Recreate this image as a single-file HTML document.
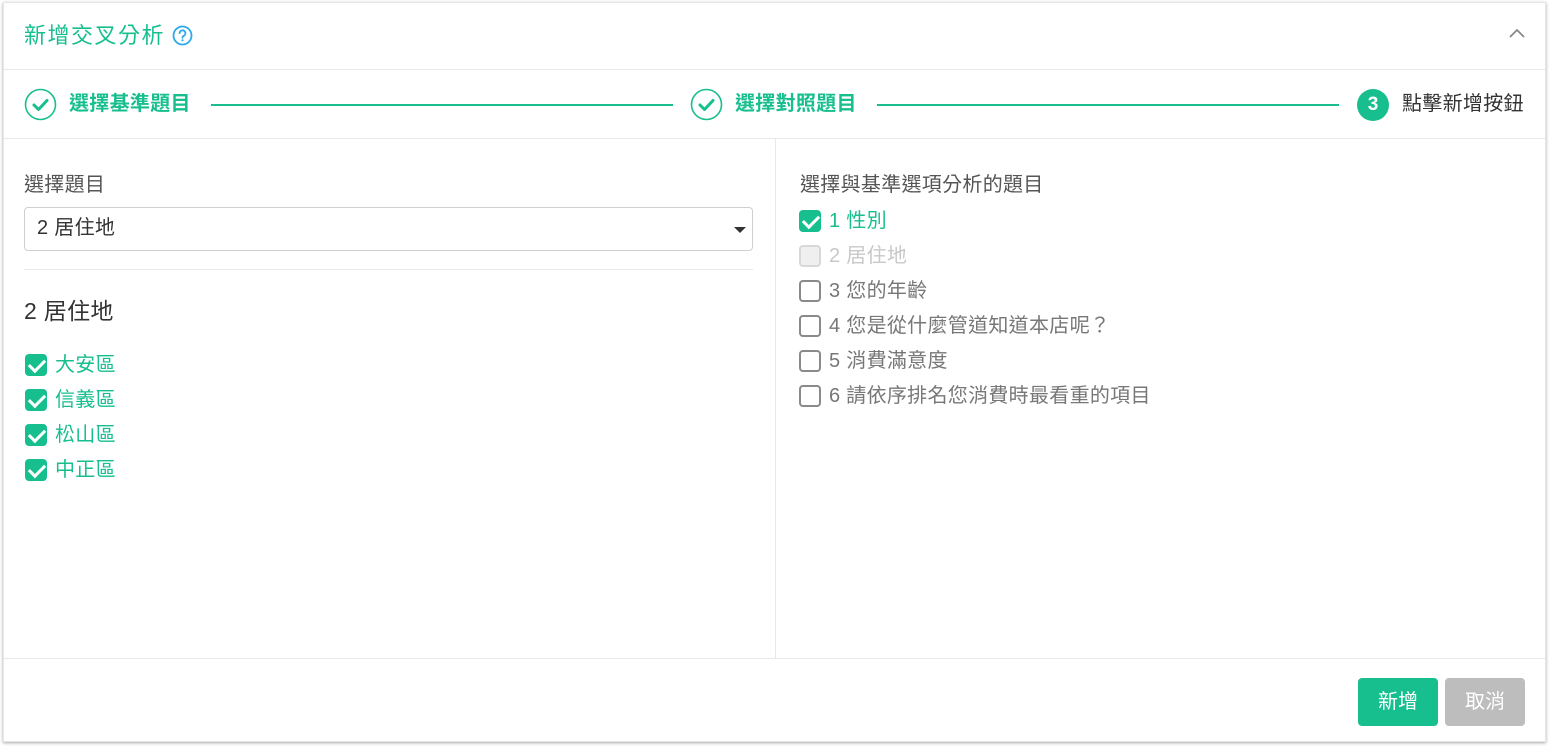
<!DOCTYPE html>
<html><head><meta charset="utf-8"><style>
*{box-sizing:border-box;margin:0;padding:0}
body{width:1552px;height:748px;background:#fff;font-family:"Liberation Sans","Noto Sans CJK TC",sans-serif;position:relative;overflow:hidden}
.panel{position:absolute;left:3px;top:2px;width:1543px;height:740px;border:1px solid #e6e6e6;box-shadow:0 1px 3px rgba(0,0,0,.35);background:#fff}
.g{color:#17bf8e}
.abs{position:absolute;white-space:nowrap}
.hl{position:absolute;left:0;right:0;height:1px;background:#e8e8e8}
.cb{position:absolute;width:22px;height:22px;border-radius:4px}
.cb.on{background:#17bf8e}
.cb.off{border:2px solid #8a8a8a}
.cb.dis{border:2px solid #d8d8d8;background:#efefef}
.lbl{position:absolute;font-size:20px;line-height:22px;white-space:nowrap;letter-spacing:0.3px}
.cb.on::after{content:"";position:absolute;width:13px;height:7px;border-left:3px solid #fff;border-bottom:3px solid #fff;transform:rotate(-45deg);left:4px;top:5px}
</style></head><body>
<div class="panel">
  <div class="abs g" style="left:20px;top:19px;font-size:22px;line-height:28px;letter-spacing:1.5px">新增交叉分析</div>
  <svg class="abs" style="left:168px;top:22px" width="21" height="21" viewBox="0 0 21 21"><circle cx="10.5" cy="10.5" r="9" fill="none" stroke="#2ca9e8" stroke-width="1.8"/><path d="M7.6 8.2a2.9 2.9 0 1 1 4.2 2.6c-.9.5-1.3 1-1.3 2" fill="none" stroke="#2ca9e8" stroke-width="1.8" stroke-linecap="round"/><circle cx="10.5" cy="15.3" r="1.1" fill="#2ca9e8"/></svg>
  <svg class="abs" style="left:1504px;top:24px" width="18" height="12" viewBox="0 0 18 12"><path d="M2 10L9 3l7 7" fill="none" stroke="#888" stroke-width="1.8"/></svg>
  <div class="hl" style="top:66px"></div>

  <svg class="abs" style="left:20px;top:85px" width="33" height="33" viewBox="0 0 33 33"><circle cx="16.5" cy="16.5" r="15" fill="none" stroke="#17bf8e" stroke-width="1.6"/><path d="M10 17l4.5 4.5L23 12.5" fill="none" stroke="#17bf8e" stroke-width="3" stroke-linecap="round" stroke-linejoin="round"/></svg>
  <div class="lbl g" style="left:65px;top:90px;font-weight:bold">選擇基準題目</div>
  <div class="abs" style="left:207px;top:101px;width:462px;height:2px;background:#17bf8e"></div>
  <svg class="abs" style="left:686px;top:85px" width="33" height="33" viewBox="0 0 33 33"><circle cx="16.5" cy="16.5" r="15" fill="none" stroke="#17bf8e" stroke-width="1.6"/><path d="M10 17l4.5 4.5L23 12.5" fill="none" stroke="#17bf8e" stroke-width="3" stroke-linecap="round" stroke-linejoin="round"/></svg>
  <div class="lbl g" style="left:731px;top:90px;font-weight:bold">選擇對照題目</div>
  <div class="abs" style="left:873px;top:101px;width:462px;height:2px;background:#17bf8e"></div>
  <div class="abs" style="left:1353px;top:86px;width:32px;height:32px;border-radius:50%;background:#17bf8e;color:#fff;font-weight:bold;font-size:19px;line-height:32px;text-align:center">3</div>
  <div class="lbl" style="left:1398px;top:90px;color:#333">點擊新增按鈕</div>
  <div class="hl" style="top:135px"></div>

  <div class="abs" style="left:771px;top:136px;width:1px;height:520px;background:#e8e8e8"></div>

  <div class="lbl" style="left:20px;top:171px;color:#555">選擇題目</div>
  <div class="abs" style="left:20px;top:204px;width:729px;height:44px;border:1px solid #cfcfcf;border-radius:4px"></div>
  <div class="lbl" style="left:33px;top:214px;color:#333">2 居住地</div>
  <div class="abs" style="left:730px;top:224px;width:0;height:0;border-left:6px solid transparent;border-right:6px solid transparent;border-top:6px solid #333"></div>
  <div class="abs" style="left:20px;top:266px;width:729px;height:1px;background:#e8e8e8"></div>
  <div class="lbl" style="left:20px;top:295px;font-size:23px;line-height:26px;color:#333">2 居住地</div>

  <div class="cb on" style="left:21px;top:351px"></div><div class="lbl g" style="left:51px;top:351px">大安區</div>
  <div class="cb on" style="left:21px;top:386px"></div><div class="lbl g" style="left:51px;top:386px">信義區</div>
  <div class="cb on" style="left:21px;top:421px"></div><div class="lbl g" style="left:51px;top:421px">松山區</div>
  <div class="cb on" style="left:21px;top:456px"></div><div class="lbl g" style="left:51px;top:456px">中正區</div>

  <div class="lbl" style="left:796px;top:171px;color:#555">選擇與基準選項分析的題目</div>
  <div class="cb on" style="left:795px;top:207px"></div><div class="lbl g" style="left:825px;top:207px">1 性別</div>
  <div class="cb dis" style="left:795px;top:242px"></div><div class="lbl" style="left:825px;top:242px;color:#c8c8c8">2 居住地</div>
  <div class="cb off" style="left:795px;top:277px"></div><div class="lbl" style="left:825px;top:277px;color:#777">3 您的年齡</div>
  <div class="cb off" style="left:795px;top:312px"></div><div class="lbl" style="left:825px;top:312px;color:#777">4 您是從什麼管道知道本店呢？</div>
  <div class="cb off" style="left:795px;top:347px"></div><div class="lbl" style="left:825px;top:347px;color:#777">5 消費滿意度</div>
  <div class="cb off" style="left:795px;top:382px"></div><div class="lbl" style="left:825px;top:382px;color:#777">6 請依序排名您消費時最看重的項目</div>

  <div class="hl" style="top:655px"></div>
  <div class="abs" style="left:1354px;top:675px;width:80px;height:48px;border-radius:4px;background:#17bf8e;color:#fff;font-size:20px;line-height:48px;text-align:center">新增</div>
  <div class="abs" style="left:1441px;top:675px;width:80px;height:48px;border-radius:4px;background:#bdbdbd;color:#fff;font-size:20px;line-height:48px;text-align:center">取消</div>
</div>
</body></html>
